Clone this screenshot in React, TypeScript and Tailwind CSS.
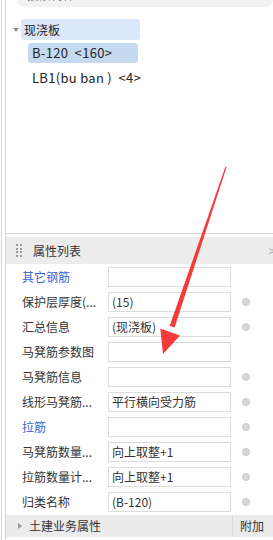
import React from "react";

const font = { fontFamily: '"Noto Sans CJK SC", "Noto Sans", sans-serif' };

interface Row {
    label: string;
    value?: string;
    blue?: boolean;
    dot?: boolean;
}

const rows: Row[] = [
    { label: "其它钢筋", blue: true },
    { label: "保护层厚度(...", value: "(15)", dot: true },
    { label: "汇总信息", value: "(现浇板)", dot: true },
    { label: "马凳筋参数图" },
    { label: "马凳筋信息", dot: true },
    { label: "线形马凳筋...", value: "平行横向受力筋", dot: true },
    { label: "拉筋", blue: true, dot: true },
    { label: "马凳筋数量...", value: "向上取整+1", dot: true },
    { label: "拉筋数量计...", value: "向上取整+1", dot: true },
    { label: "归类名称", value: "(B-120)", dot: true },
];

export default function App() {
    return (
        <div className="relative w-[273px] h-[540px] overflow-hidden bg-white text-[12px] text-[#333]" style={font}>
            <div className="ml-[1px] h-full border-l border-[#d6d6d6]">
                <div className="ml-[3px] h-full border-l border-[#d6d6d6] flex flex-col">
                    {/* Tree panel */}
                    <div className="h-[234px] border-b border-[#d9d9d9] flex flex-col">
                        <div className="ml-[11px] mt-[-17px] h-[24px] rounded-b-[8px] bg-[#f2f2f2] flex items-end pl-[10px] text-[#8a8a8a] leading-[14px] pb-[5px]">
                            搜索构件...
                        </div>
                        <div className="mt-[12px] flex items-center">
                            <span className="w-0 h-0 ml-[7px] mr-[2px] border-l-[3px] border-r-[3px] border-t-[4px] border-l-transparent border-r-transparent border-t-[#8c8c8c]"></span>
                            <div className="w-[119px] h-[21px] rounded-[3px] bg-[#dbe8fa] flex items-center pl-[3px] text-[#222]">
                                现浇板
                            </div>
                        </div>
                        <div className="mt-[3px] ml-[22px] w-[110px] h-[20px] rounded-[3px] bg-[#c5daf1] flex items-center pl-[4px] text-[#222] text-[13px] tracking-[0.3px] whitespace-pre">
                            B-120  &lt;160&gt;
                        </div>
                        <div className="mt-[4px] ml-[26px] h-[21px] flex items-center text-[#222] text-[13px] tracking-[0.3px] whitespace-pre">
                            LB1(bu ban )  &lt;4&gt;
                        </div>
                    </div>

                    {/* Header */}
                    <div className="mt-[3px] h-[27px] bg-[#ececec] flex items-center">
                        <div className="ml-[10px] grid grid-cols-2 gap-x-[2px] gap-y-[1.5px]">
                            {Array.from({ length: 8 }).map((_, i) => (
                                <span key={i} className="w-[2px] h-[2px] bg-[#9a9a9a]"></span>
                            ))}
                        </div>
                        <span className="ml-[11px] text-[12px] text-[#333]">属性列表</span>
                        <span className="ml-auto mr-[-3px] text-[#aaa] text-[13px]">&gt;</span>
                    </div>

                    {/* Property rows */}
                    <div className="flex flex-col">
                        {rows.map((r, i) => (
                            <div key={i} className="h-[25px] flex items-center">
                                <span className={`w-[86px] pl-[16px] whitespace-nowrap ${r.blue ? "text-[#2f66d8]" : "text-[#333]"}`}>
                                    {r.label}
                                </span>
                                <div className="ml-[16px] w-[123px] h-[20px] mt-[1px] border border-[#dcdcdc] flex items-center pl-[3px] text-[#333]">
                                    {r.value}
                                </div>
                                <div className="w-[30px] flex justify-center">
                                    {r.dot && (
                                        <span className="w-[8px] h-[8px] rounded-full bg-[#d8d8d8] border border-[#c9c9c9]"></span>
                                    )}
                                </div>
                            </div>
                        ))}
                    </div>

                    {/* Bottom row */}
                    <div className="mt-[1px] h-[22px] bg-[#ebebeb] flex items-center">
                        <span className="w-0 h-0 ml-[12px] border-t-[3px] border-b-[3px] border-l-[4px] border-t-transparent border-b-transparent border-l-[#9a9a9a]"></span>
                        <span className="ml-[7px]">土建业务属性</span>
                        <div className="ml-auto w-[41px] h-full border-l border-[#dcdcdc] flex items-center pl-[7px]">附加</div>
                    </div>
                </div>
            </div>

            {/* Red annotation arrow */}
            <svg className="absolute inset-0 pointer-events-none" width="273" height="540" viewBox="0 0 273 540">
                <polygon points="226.6,167 225.4,166.8 169.6,326 174.6,327.6" fill="#f53a3a" />
                <polygon points="160.3,328.6 180,335.4 163,354" fill="#f53a3a" />
            </svg>
        </div>
    );
}
